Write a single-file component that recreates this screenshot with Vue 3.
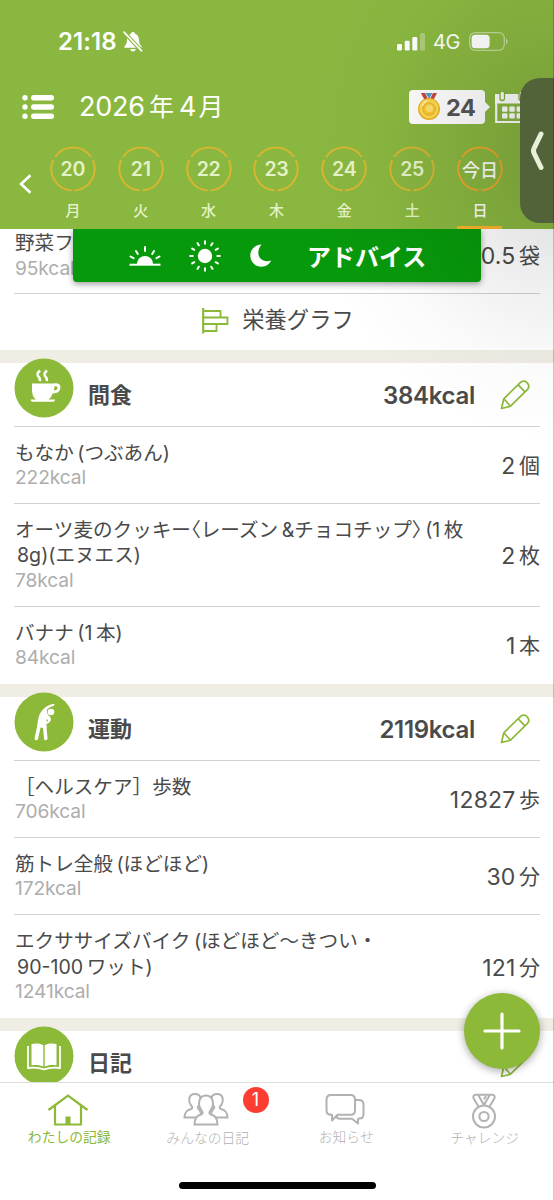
<script setup>
const days = [
  { n: '20', d: '月' },
  { n: '21', d: '火' },
  { n: '22', d: '水' },
  { n: '23', d: '木' },
  { n: '24', d: '金' },
  { n: '25', d: '土' },
  { n: '今日', d: '日', today: true },
]

const sections = [
  {
    icon: 'cup',
    title: '間食',
    total: '384kcal',
    rows: [
      { lines: [['もなか', '(つぶあん)']], kcal: '222kcal', n: '2', unit: '個' },
      { lines: [['オーツ麦のクッキー〈レーズン', '&チョコチップ〉', '(1', '枚'], ['8g)(エヌエス)']], kcal: '78kcal', n: '2', unit: '枚' },
      { lines: [['バナナ', '(1', '本)']], kcal: '84kcal', n: '1', unit: '本' },
    ],
  },
  {
    icon: 'stretch',
    title: '運動',
    total: '2119kcal',
    rows: [
      { lines: [['［ヘルスケア］歩数']], kcal: '706kcal', n: '12827', unit: '歩' },
      { lines: [['筋トレ全般', '(ほどほど)']], kcal: '172kcal', n: '30', unit: '分' },
      { lines: [['エクササイズバイク', '(ほどほど～きつい・'], ['90-100', 'ワット)']], kcal: '1241kcal', n: '121', unit: '分' },
    ],
  },
  { icon: 'book', title: '日記', total: '', rows: [] },
]

// Angle brackets are set half-width inside product names.
const hasAngle = (line) => line.some((seg) => seg.includes('〈'))
</script>

<template>
  <div class="screen">
    <header class="header">
      <div class="status">
        <span class="clock">21:18</span>
        <svg class="bell" width="20" height="22" viewBox="0 0 20 22">
          <path d="M10 1c1.2 0 2 .8 2.1 1.8 2.6.9 3.8 3.100 3.900 5.800.1 3.700.9 5.200 2.500 6.800.4.500.2 1.400-.6 1.400H2.100c-.800 0-1-.900-.600-1.400C3.100 13.800 3.900 12.300 4 8.600c.1-2.700 1.300-4.900 3.900-5.800C8 1.800 8.800 1 10 1zM7.200 18h5.600c-.3 1.500-1.300 2.400-2.800 2.400S7.500 19.500 7.200 18z" fill="#fff" />
          <path d="M0.500 0.600L19 20.500" stroke="#8ab740" stroke-width="4" />
          <path d="M1 1.200L18.600 19.900" stroke="#fff" stroke-width="1.700" stroke-linecap="round" />
        </svg>
        <svg class="signal" width="28" height="18" viewBox="0 0 28 18">
          <rect x="0" y="11" width="5" height="6.500" rx="1.300" fill="#fff" />
          <rect x="7.700" y="7.800" width="5" height="9.700" rx="1.300" fill="#fff" />
          <rect x="15.300" y="4" width="5" height="13.500" rx="1.300" fill="#fff" />
          <rect x="23" y="0" width="5" height="17.500" rx="1.300" fill="#fff" opacity=".3" />
        </svg>
        <span class="net">4G</span>
        <svg class="battery" width="40" height="19" viewBox="0 0 40 19">
          <rect x=".7" y=".7" width="34.600" height="17.600" rx="5.500" fill="none" stroke="#fff" stroke-opacity=".45" stroke-width="1.300" />
          <rect x="2.600" y="2.700" width="18" height="13.600" rx="3.600" fill="#fff" />
          <path d="M37 6.500c2 .7 2 5.300 0 6z" fill="#fff" opacity=".5" />
        </svg>
      </div>

      <div class="titlebar">
        <svg class="menu" width="32" height="25" viewBox="0 0 32 25" fill="#fff">
          <circle cx="3" cy="2.700" r="2.700" /><circle cx="3" cy="12" r="2.700" /><circle cx="3" cy="21.300" r="2.700" />
          <rect x="9" width="23" height="5.400" rx="2.700" /><rect x="9" y="9.300" width="23" height="5.400" rx="2.700" /><rect x="9" y="18.600" width="23" height="5.400" rx="2.700" />
        </svg>
        <h1 class="month"><span class="year">2026</span><span class="kj">年</span><span class="mon">4</span><span class="kj">月</span></h1>
        <div class="points">
          <svg width="24" height="28" viewBox="0 0 24 28">
            <path d="M4 0h4l3 6-3 2z" fill="#c8453f" /><path d="M8.500 0h7L12.500 5h-1z" fill="#4f9ec4" /><path d="M20 0h-4l-3 6 3 2z" fill="#c8453f" />
            <circle cx="12" cy="16" r="11" fill="#f0b322" /><circle cx="12" cy="15.700" r="9.700" fill="#ffdc50" />
            <circle cx="12" cy="16" r="6.300" fill="#fbc833" stroke="#e8ac22" stroke-width=".8" />
            <circle cx="12.500" cy="15.500" r="3.800" fill="#ffe26e" /><path d="M5 13a8 8 0 0 1 5-5" fill="none" stroke="#fff2ac" stroke-width="1.600" />
          </svg>
          <span>24</span>
        </div>
        <svg class="calendar" width="34" height="33" viewBox="0 0 34 33">
          <path d="M1.200 4v27h31.500V4" fill="none" stroke="#fff" stroke-width="2.200" />
          <path d="M0 3h34v9.500H0z" fill="#fff" />
          <rect x="5" y="0" width="4.500" height="9.500" rx="2.200" fill="#fff" stroke="#84b03e" stroke-width="1.300" />
          <rect x="24" y="0" width="4.500" height="9.500" rx="2.200" fill="#fff" stroke="#84b03e" stroke-width="1.300" />
          <g fill="#fff"><rect x="7" y="15.500" width="5.500" height="5.300" rx="1" /><rect x="14.300" y="15.500" width="5.500" height="5.300" rx="1" /><rect x="21.600" y="15.500" width="5.500" height="5.300" rx="1" /><rect x="7" y="22.300" width="5.500" height="5.300" rx="1" /><rect x="14.300" y="22.300" width="5.500" height="5.300" rx="1" /><rect x="21.600" y="22.300" width="5.500" height="5.300" rx="1" /></g>
        </svg>
      </div>

      <div class="week">
        <svg class="prev" width="14" height="20" viewBox="0 0 14 20"><path d="M12.500 1.200L3 10l9.500 8.800" fill="none" stroke="#fff" stroke-width="2.600" /></svg>
        <div v-for="day in days" :key="day.d" class="day" :class="{ today: day.today }">
          <div class="ring">
            <svg width="46" height="46" viewBox="0 0 46 46">
              <g fill="none" stroke="currentColor" stroke-width="2">
                <path d="M5 11A21.700 21.700 0 0 1 41 11" />
                <path d="M42.800 14A21.700 21.700 0 0 1 24.500 44.500" />
                <path d="M21.500 44.500A21.700 21.700 0 0 1 3.200 14" />
              </g>
            </svg>
            <span>{{ day.n }}</span>
          </div>
          <div class="wd">{{ day.d }}</div>
        </div>
      </div>
    </header>

    <main class="list">
      <div class="row first">
        <div class="info">
          <div class="name"><span>野菜フ</span></div>
          <div class="kcal">95kcal</div>
        </div>
        <div class="qty"><span>0.5</span><span class="unit">袋</span></div>
      </div>
      <div class="graph">
        <svg width="27" height="26" viewBox="0 0 27 26" fill="none" stroke="#8cb938" stroke-width="1.800">
          <path d="M1.200 0v25.500" stroke-width="2.200" /><path d="M1 3h17.500v6.500M1 9.500h24.500v6.500H1M14.500 16v7H1" />
        </svg>
        <span>栄養グラフ</span>
      </div>

      <section v-for="s in sections" :key="s.title" class="section">
        <div class="head">
          <svg v-if="s.icon === 'cup'" class="badge" width="60" height="60" viewBox="0 0 60 60">
            <circle cx="30" cy="30" r="29.500" fill="#8cb938" />
            <path d="M18 25.500h21.500c6-1.500 8 2 6.500 6-1.200 3.200-4.500 4-7.500 4-.7 3-2 4.500-4 6h6.500c0 1.700-.8 2.200-2.300 2.200H19c-1.400 0-2.300-.7-2.300-2.200H22c-2.500-1.800-4-5-4-9z" fill="#fff" />
            <path d="M40.500 28.500c2-.6 3.300 0 2.900 1.800-.4 1.600-1.900 2.300-3.500 2.200z" fill="#8cb938" />
            <path d="M26 12.500c-4 3.500-2.500 5-1.200 6.500 1.200 1.400 1.500 2.500.7 4M33 12.500c-4 3.500-2.500 5-1.200 6.500 1.200 1.400 1.500 2.500.7 4" fill="none" stroke="#fff" stroke-width="2.500" />
          </svg>
          <svg v-else-if="s.icon === 'stretch'" class="badge" width="60" height="60" viewBox="0 0 60 60">
            <circle cx="30" cy="30" r="29.500" fill="#8cb938" />
            <circle cx="37" cy="20" r="3.300" fill="#fff" />
            <path d="M22.300 46.500L25.500 32M30.500 33l1.300 13.500" fill="none" stroke="#fff" stroke-width="3.500" stroke-linecap="round" />
            <path d="M23.500 35c.2-7 1-12 4.200-16 3-4 7-6.400 12-7.200.9 0 1 1.600.2 1.900-3.400.9-5.700 2.300-7.200 4.300.2 3 .9 5 2.800 6.300 1.500 1.500 2 3.500.5 5.500-1.300 1.500-2.500 2-3.700 2.200l.3 4.500z" fill="#fff" />
            <path d="M32.800 26.500l1.300 2.300-1.500 1.300z" fill="#8cb938" />
          </svg>
          <svg v-else class="badge" width="60" height="60" viewBox="0 0 60 60">
            <circle cx="30" cy="30" r="29.500" fill="#8cb938" />
            <path d="M17.500 18c5-1 9-.5 11.800 1.200v21.300c-3-1.500-7-2-11.800-1.200zM42.500 18c-5-1-9-.5-11.800 1.200v21.300c3-1.500 7-2 11.800-1.200z" fill="#fff" />
            <path d="M14 20v22c6-.8 11-.5 16 1.400 5-1.900 10-2.200 16-1.400V20" fill="none" stroke="#fff" stroke-width="1.800" />
          </svg>
          <h2>{{ s.title }}</h2>
          <span class="total">{{ s.total }}</span>
          <svg class="pencil" width="30" height="30" viewBox="0 0 30 30" fill="none" stroke="#8cb938" stroke-width="1.700" stroke-linejoin="round">
            <path d="M1.500 28.500L3.800 18.800 20.300 2.600c2-2 5-1.800 6.900.2s2 4.800.1 6.800L10.500 26.200zM3.800 18.800l6.700 7.400M18.200 4.800l6.800 7" />
          </svg>
        </div>
        <div v-for="r in s.rows" :key="r.kcal" class="row">
          <div class="info">
            <div v-for="(line, i) in r.lines" :key="i" class="name" :class="{ cont: i > 0, angle: hasAngle(line) }"><span v-for="seg in line" :key="seg">{{ seg }}</span></div>
            <div class="kcal">{{ r.kcal }}</div>
          </div>
          <div class="qty"><span>{{ r.n }}</span><span class="unit">{{ r.unit }}</span></div>
        </div>
      </section>
    </main>

    <div class="advice">
      <svg class="sunrise" width="32" height="20" viewBox="0 0 32 20" stroke="#fff" stroke-width="2" fill="none">
        <path d="M.5 18.700h31" /><path d="M8 18a8 8 0 0 1 16 0z" fill="#fff" stroke="none" />
        <path d="M1.500 10.500l3 1.700M7 5L8.800 8M16 1v4M25 5L23.200 8M30.500 10.500l-3 1.700" stroke-linecap="round" />
      </svg>
      <svg class="sun" width="32" height="32" viewBox="0 0 32 32" stroke="#fff" stroke-width="2" stroke-linecap="round">
        <circle cx="16" cy="16" r="7.200" fill="#fff" stroke="none" />
        <path d="M16 1.200v2.500M16 28.300v2.500M1.200 16h2.500M28.300 16h2.500M8.600 3.200l1.200 2.100M22.200 26.700l1.200 2.100M3.200 8.600l2.100 1.200M26.700 22.200l2.100 1.200M3.200 23.400l2.100-1.200M26.700 9.800l2.100-1.200M8.600 28.800l1.200-2.100M22.200 5.300l1.200-2.100" />
      </svg>
      <svg class="moon" width="22" height="23" viewBox="0 0 22 23"><path d="M11.500.5C5 .8.3 5.500.3 11.500.3 18 5.500 22.700 11.300 22.700c4.700 0 8.200-2.500 9.900-6.200-4.400 1.400-8 .7-10.500-1.800C7.300 11.200 7.500 5.500 11.500.5z" fill="#fff" /></svg>
      <span>アドバイス</span>
    </div>

    <div class="shade"></div>
    <div class="edge"></div>

    <div class="drawer">
      <svg width="14" height="40" viewBox="0 0 14 40"><path d="M11 3L4.200 17c-1 2-1 3.500 0 5.500L11 36.500" fill="none" stroke="#e8f0d8" stroke-width="5" stroke-linecap="round" stroke-linejoin="round" /></svg>
    </div>

    <button class="fab" aria-label="追加">
      <svg width="38" height="38" viewBox="0 0 38 38"><path d="M19 2v34M2 19h34" stroke="#fff" stroke-width="3.200" stroke-linecap="round" /></svg>
    </button>

    <nav class="tabs">
      <div class="tab active">
        <svg width="42" height="36" viewBox="0 0 42 36" fill="none" stroke="currentColor" stroke-width="2.200">
          <path d="M1.500 18L21 3.500l19.500 14.500" /><path d="M8 14v18.500h26V14" /><path d="M18.500 24.500h5v8h-5z" fill="currentColor" stroke="none" />
        </svg>
        <span>わたしの記録</span>
      </div>
      <div class="tab people">
        <svg width="48" height="36" viewBox="0 0 48 36" fill="#fff" stroke="currentColor" stroke-width="2">
          <path d="M2.500 26.500c0-6 3-7.500 6.500-8.500 1.500-.5 1.600-1.700.8-2.700C5.500 10 6.500 3 13 3s7.500 7 3.200 12.300c-.8 1-.7 2.200.8 2.700l4 8.500z" />
          <path d="M45.500 26.500c0-6-3-7.500-6.500-8.500-1.500-.5-1.600-1.700-.8-2.700C42.500 10 41.500 3 35 3s-7.500 7-3.200 12.300c.8 1 .7 2.200-.8 2.700l-4 8.500z" />
          <path d="M12.500 33.500c0-6.500 2-9 6.500-10 1.800-.5 2-2 1-3.300C15 14 16.500 4.500 24 4.500s9 9.500 4 15.700c-1 1.300-.8 2.800 1 3.300 4.500 1 6.500 3.500 6.500 10z" />
        </svg>
        <span>みんなの日記</span>
        <b class="count">1</b>
      </div>
      <div class="tab notice">
        <svg width="40" height="36" viewBox="0 0 40 36" fill="none" stroke="currentColor" stroke-width="2" stroke-linejoin="round">
          <path d="M29.500 8H34c3 0 4.500 1.500 4.500 4.500v9.500c0 3-1.300 4.500-4 4.500L33 27v4.500l-6-4.800H15c-2 0-3.500-1-3.500-3" />
          <path d="M6 3h19.500c3 0 4.500 1.500 4.500 4.500v10.700c0 3-1.500 4.500-4.500 4.500H12.500L7 28.500v-5.800H6c-3 0-4.500-1.500-4.500-4.500V7.500C1.500 4.500 3 3 6 3z" fill="#fff" />
        </svg>
        <span>お知らせ</span>
      </div>
      <div class="tab challenge">
        <svg width="26" height="36" viewBox="0 0 26 36" fill="none" stroke="currentColor" stroke-width="2" stroke-linejoin="round">
          <circle cx="13" cy="23.500" r="11" /><circle cx="13" cy="23.500" r="4.600" />
          <path d="M7.500 13.500L2.700 5.500C1.700 3.500 2.500 1.800 4.500 1.800h17c2 0 2.800 1.700 1.800 3.700l-4.800 8M7.500 2.500L13 12l5.500-9.500M13 6.500l2-3.500" />
        </svg>
        <span>チャレンジ</span>
      </div>
      <div class="home"></div>
    </nav>
  </div>
</template>

<style>
body { margin: 0; background: #fff; }
</style>

<style scoped>
.screen { position: relative; width: 554px; height: 1200px; overflow: hidden; background: #fff; font-family: Inter, "Noto Sans CJK JP", sans-serif; color: #4a4a4a; display: flex; flex-direction: column; }
.screen svg { display: block; flex: none; }
h1, h2 { margin: 0; font-weight: 400; }
.header { height: 229px; flex: none; background: #8ab740; color: #fff; }
.status { height: 83px; display: flex; align-items: center; padding-left: 58px; box-sizing: border-box; }
.clock { width: 61px; font-size: 24px; font-weight: 600; letter-spacing: .1px; white-space: nowrap; }
.bell { margin-left: 4px; }
.signal { margin-left: 254px; }
.net { margin-left: 8px; width: 28px; font-size: 20px; letter-spacing: -.5px; }
.battery { margin-left: 8px; }
.titlebar { height: 48px; display: flex; align-items: center; padding-left: 22px; }
.month { width: 329px; height: 40px; display: flex; align-items: center; line-height: 40px; padding-left: 25px; box-sizing: border-box; font-size: 27px; }
.year { letter-spacing: -.2px; }
.mon { margin-left: 5px; margin-right: 2px; }
.kj { font-size: 25px; }
.year + .kj { margin-left: 4px; }
.points { position: relative; margin-left: 26px; width: 76px; height: 34px; background: #fff; border-radius: 4px; display: flex; align-items: center; padding-left: 8px; box-sizing: border-box; gap: 5px; color: #555; font-weight: 700; font-size: 23.500px; letter-spacing: -.5px; }
.points::after { content: ""; position: absolute; left: 76px; top: 12px; border: 5px solid transparent; border-left-color: #fff; border-right-width: 0; }
.calendar { margin-left: 10px; }
.week { position: relative; display: flex; height: 98px; padding-left: 39px; }
.prev { position: absolute; left: 18px; top: 43px; }
.day { width: 67.850px; flex: none; display: flex; flex-direction: column; align-items: center; color: #e4f2c8; position: relative; }
.ring { position: relative; margin-top: 15px; width: 46px; height: 46px; display: flex; align-items: center; justify-content: center; color: #d8b630; }
.ring svg { position: absolute; inset: 0; }
.ring span { color: #e4f2c8; font-size: 19.500px; font-weight: 600; letter-spacing: -.2px; }
.wd { margin-top: 8px; height: 22px; line-height: 22px; font-size: 15px; font-weight: 500; }
.today .ring { color: #eda92d; }
.today .ring span { font-size: 18px; font-weight: 500; color: #fff; white-space: nowrap; letter-spacing: 0; }
.today { color: #fff; }
.today::after { content: ""; position: absolute; bottom: 0; width: 45px; height: 3px; background: #fab42c; }

.list { flex: 1; min-height: 0; }
.row { height: 77.250px; box-sizing: border-box; margin: 0 14px; border-bottom: 1.500px solid #d2d2d2; display: flex; justify-content: space-between; padding-top: 14px; }
.row:has(.cont) { height: 103px; }
.row:last-child { border-bottom: 0; }
.row.first { height: 65px; padding-top: 2px; }
.name { height: 25.700px; line-height: 25.700px; font-size: 19.600px; display: flex; gap: 3.500px; white-space: nowrap; }
.name.cont { padding-left: 2px; }
.name.angle { font-feature-settings: "halt"; gap: 3.500px; }
.kcal { height: 22px; line-height: 22px; font-size: 19.200px; color: #adadad; letter-spacing: -.1px; }
.info { margin-left: 1px; }
.qty { align-self: center; margin-top: -12px; display: flex; align-items: center; gap: 3.500px; font-size: 23px; letter-spacing: .2px; height: 30px; line-height: 30px; }
.unit { font-size: 21px; letter-spacing: 0; }
.graph { height: 56px; padding-left: 2px; display: flex; align-items: center; justify-content: center; gap: 13px; font-size: 22.300px; line-height: 30px; }
.graph span { margin-top: -4px; }
.graph svg { margin-top: -2px; }
.section { height: 334px; box-sizing: border-box; border-top: 13.500px solid #efede4; }
.head { height: 63.500px; box-sizing: border-box; margin: 0 14px; border-bottom: 1.500px solid #d2d2d2; display: flex; align-items: center; padding-top: 1.500px; }
.badge { margin-top: -14px; position: relative; }
.head h2 { margin-left: 14px; font-size: 22px; font-weight: 700; line-height: 30px; }
.total { margin-left: auto; font-size: 24px; font-weight: 600; letter-spacing: -.3px; }
.pencil { margin: 0 10px 0 25px; }

.advice { position: absolute; left: 73px; top: 229px; width: 408px; height: 53px; background: #07990c; border-radius: 0 0 4px 4px; box-shadow: 0 2px 6px rgba(0,0,0,.4); clip-path: inset(0 -10px -12px -10px); display: flex; align-items: center; color: #fff; font-size: 24px; font-weight: 700; }
.sunrise { margin-left: 56px; }
.sun { margin-left: 28px; }
.moon { margin-left: 29px; }
.advice span { margin: 4px 0 0 35px; white-space: nowrap; line-height: 40px; }

.shade { position: absolute; inset: 0; height: 480px; background: radial-gradient(ellipse 250px 290px at 554px 155px, rgba(0,0,0,.16), rgba(0,0,0,.075) 38%, rgba(0,0,0,.02) 72%, transparent); }
.edge { position: absolute; right: 0; top: 0; width: 1px; height: 100%; background: rgba(0,0,0,.2); z-index: 2; }
.drawer { position: absolute; left: 520px; top: 78px; width: 34px; height: 145px; box-sizing: border-box; border-radius: 20px 0 0 20px; background: #52633a; display: flex; align-items: center; padding-left: 10px; }
.fab { position: absolute; left: 464px; top: 993px; width: 76px; height: 76px; padding: 0; border: 0; border-radius: 50%; background: #8cb938; box-shadow: 0 2px 8px rgba(0,0,0,.35); display: flex; align-items: center; justify-content: center; }

.tabs { position: relative; flex: none; height: 118px; box-sizing: border-box; background: #fff; border-top: 1.500px solid #dedede; display: flex; }
.tab { width: 138.500px; flex: none; position: relative; display: flex; flex-direction: column; align-items: center; padding-top: 9px; box-sizing: border-box; color: #b2b2b2; font-size: 13.800px; font-weight: 300; }
.tab span { line-height: 20px; margin-top: -1px; white-space: nowrap; }
.tab.active { color: #8cb938; font-weight: 400; }
.tab.active svg { margin-left: -2px; }
.people svg { margin: -1px 0 2px -3px; }
.notice svg { margin-left: -2px; }
.challenge svg { margin: 1px 0 0 -2px; }
.count { position: absolute; left: 104px; top: 4px; width: 26px; height: 26px; border-radius: 50%; background: #fc3d31; color: #fff; font-size: 18px; font-weight: 400; line-height: 26px; text-align: center; }
.home { position: absolute; left: 179px; top: 98.500px; width: 197px; height: 7px; border-radius: 4px; background: #000; }
</style>
